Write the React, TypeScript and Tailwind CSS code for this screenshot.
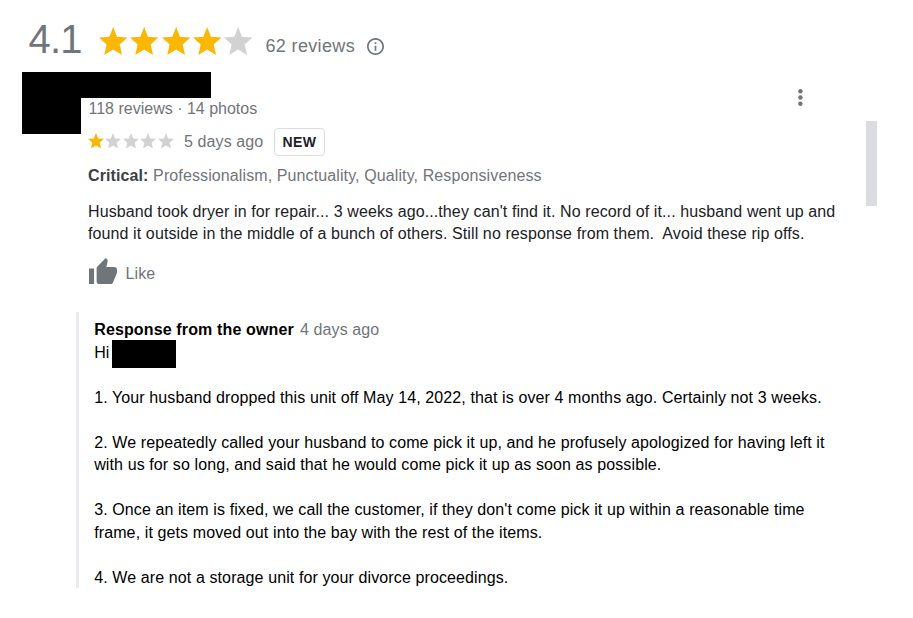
const STAR = "M12 17.2 18.3 21l-1.7-7.1L22 9.2l-7.3-.5L12 2 9.3 8.7 2 9.2l5.4 4.7L5.7 21z";

function Stars({ filled, size, gap }: { filled: number; size: string; gap: string }) {
  return (
    <div className={`flex shrink-0 ${gap}`}>
      {[0, 1, 2, 3, 4].map((i) => (
        <svg
          key={i}
          viewBox="2 2 20 19"
          preserveAspectRatio="none"
          className={`${size} shrink-0 ${i < filled ? "text-[#fbb706]" : "text-[#d2d2d2]"}`}
        >
          <path d={STAR} fill="currentColor" />
        </svg>
      ))}
    </div>
  );
}

function Header() {
  return (
    <header className="flex h-[72px] items-start pl-[28.5px] text-[#70757a]">
      <div className="mt-[16px] w-[70.5px] text-[40px] leading-[46px] tracking-[-0.8px]">4.1</div>
      <div className="mt-[27px]">
        <Stars filled={4} size="h-7 w-[28.3px]" gap="gap-[3px]" />
      </div>
      <span className="mt-[35px] ml-[13px] w-[101.5px] text-[18px] leading-[22px] tracking-[0.35px]">62 reviews</span>
      <svg viewBox="2 2 20 20" className="mt-[37.5px] h-[17px] w-[17px]" fill="currentColor">
        <path d="M11 7h2v2h-2zm0 4h2v6h-2zm1-9C6.48 2 2 6.48 2 12s4.48 10 10 10 10-4.48 10-10S17.52 2 12 2zm0 18c-4.41 0-8-3.59-8-8s3.59-8 8-8 8 3.59 8 8-3.59 8-8 8z" />
      </svg>
    </header>
  );
}

function Review() {
  return (
    <section className="flex h-[240px] pl-[22px]">
      <div className="h-[62px] w-[59px] shrink-0 bg-black" />
      <div className="w-[785px]">
        <div className="flex h-[56px] justify-between">
          <div>
            <div className="h-[26px] w-[130px] bg-black" />
            <div className="pl-[7.5px] leading-[22px] text-[#70757a]">118 reviews · 14 photos</div>
          </div>
          <svg viewBox="0 0 6 18" className="mt-[17px] mr-[63px] h-[18px] w-[6px]" fill="#70757a">
            <circle cx="3.4" cy="2.3" r="2.2" />
            <circle cx="3.4" cy="8.5" r="2.2" />
            <circle cx="3.4" cy="14.7" r="2.2" />
          </svg>
        </div>
        <div className="flex h-7 items-center pl-[7px] text-[#70757a]">
          <div className="-mt-[3px]">
            <Stars filled={1} size="h-[15.5px] w-[16px]" gap="gap-[1.4px]" />
          </div>
          <span className="ml-[10.4px] w-[90px] leading-[22px] tracking-[0.11px]">5 days ago</span>
          <span className="flex h-7 w-[51px] items-center justify-center rounded-[4px] border border-[#dadce0] text-[14px] font-bold tracking-[0.4px] text-[#202124]">
            NEW
          </span>
        </div>
        <p className="mt-[9px] pl-[7px] leading-[22px] tracking-[0.11px] text-[#70757a]">
          <b className="text-[#3c4043]">Critical:</b> Professionalism, Punctuality, Quality, Responsiveness
        </p>
        <div className="mt-[14px] pl-[7px] leading-[22px] tracking-[0.105px] whitespace-pre text-[#202124]">
          <p>Husband took dryer in for repair... 3 weeks ago...they can't find it. No record of it... husband went up and</p>
          <p>found it outside in the middle of a bunch of others. Still no response from them.  Avoid these rip offs.</p>
        </div>
        <div className="mt-[13px] flex pl-2 text-[#70757a]">
          <svg viewBox="1 1 22 20" preserveAspectRatio="none" className="h-[26px] w-7" fill="currentColor">
            <path d="M1 21h4V9H1v12zm22-11c0-1.1-.9-2-2-2h-6.31l.95-4.57.03-.32c0-.41-.17-.79-.44-1.06L14.17 1 7.59 7.59C7.22 7.95 7 8.45 7 9v10c0 1.1.9 2 2 2h9c.83 0 1.54-.5 1.84-1.22l3.02-7.05c.09-.23.14-.47.14-.73v-2z" />
          </svg>
          <span className="mt-[5px] ml-[8.5px] leading-[22px] tracking-[0.11px]">Like</span>
        </div>
      </div>
    </section>
  );
}

function OwnerResponse() {
  return (
    <section className="ml-[76px] h-[276px] border-l-[3px] border-[#e8eaed] pt-[7px] pl-[15.2px] leading-[22.5px] tracking-[0.108px] whitespace-pre text-black">
      <div className="flex">
        <b className="w-[205.8px] tracking-[0.14px]">Response from the owner</b>
        <span className="text-[#70757a]">4 days ago</span>
      </div>
      <div className="flex h-[45px]">
        <span className="w-[17.8px]">Hi</span>
        <div className="-mt-[1.5px] h-7 w-16 bg-black" />
      </div>
      <p>1. Your husband dropped this unit off May 14, 2022, that is over 4 months ago. Certainly not 3 weeks.</p>
      <div className="mt-[22.5px]">
        <p>2. We repeatedly called your husband to come pick it up, and he profusely apologized for having left it</p>
        <p>with us for so long, and said that he would come pick it up as soon as possible.</p>
      </div>
      <div className="mt-[22.5px]">
        <p>3. Once an item is fixed, we call the customer, if they don't come pick it up within a reasonable time</p>
        <p>frame, it gets moved out into the bay with the rest of the items.</p>
      </div>
      <p className="mt-[22.5px]">4. We are not a storage unit for your divorce proceedings.</p>
    </section>
  );
}

export default function App() {
  return (
    <div className="h-[618px] w-[913px] overflow-hidden bg-white font-['Liberation_Sans',Arial,sans-serif] text-[16px]">
      <Header />
      <div className="flex">
        <main className="w-[866px] shrink-0">
          <Review />
          <OwnerResponse />
        </main>
        <div className="mt-[49px] h-[85px] w-[11px] bg-[#dadce0]" />
      </div>
    </div>
  );
}
